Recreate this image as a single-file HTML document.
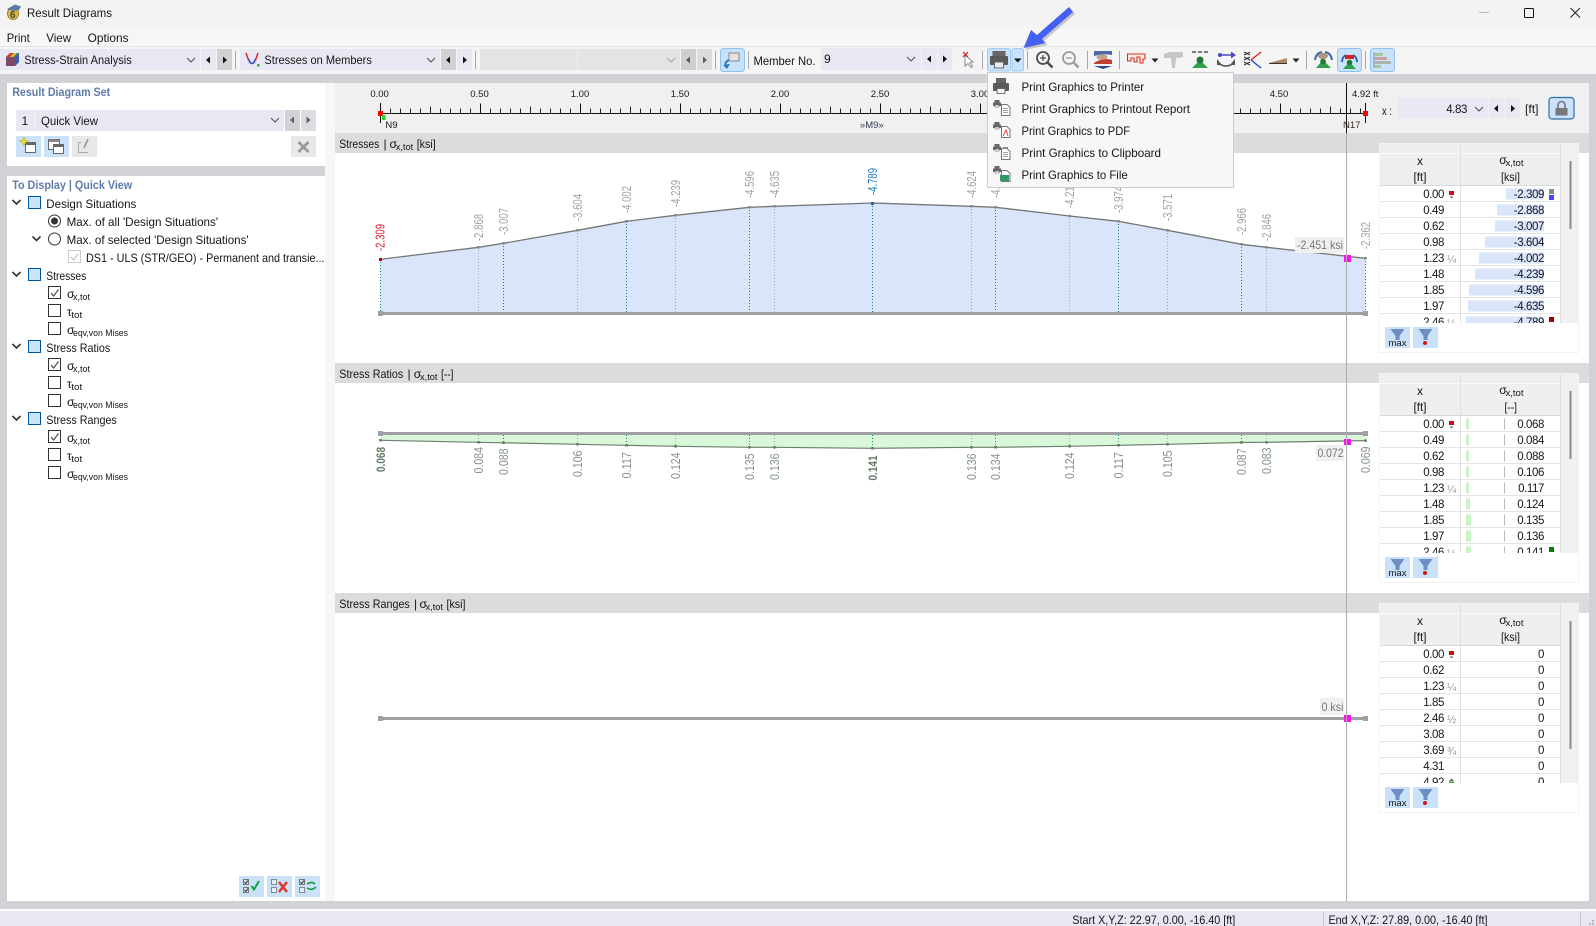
<!DOCTYPE html>
<html><head><meta charset="utf-8"><title>Result Diagrams</title>
<style>
html,body{margin:0;padding:0;background:#fff}
svg{display:block}
text{font-family:"Liberation Sans",sans-serif;font-size:12px;fill:#151515;white-space:pre}
.n{font-size:11.5px;letter-spacing:-.4px;text-anchor:end}
.s{font-size:9.5px}
.h{font-weight:bold;fill:#5f7ca8}
.r{font-size:9.5px;text-anchor:middle}
.g{fill:#a2a2a2;font-size:12.5px}
.gr{fill:#87968a;font-size:12.5px}
.f{font-size:11px;fill:#999}
</style></head><body>
<svg xmlns="http://www.w3.org/2000/svg" width="1596" height="926" viewBox="0 0 1596 926">
<defs>
<path id="chev" d="M-4-2L0 2L4-2" fill="none" stroke="#555" stroke-width="1.1"/>
<path id="chd" d="M-4-2L0 2L4-2" fill="none" stroke="#333" stroke-width="1.6"/>
<path id="tl" d="M2-3.5L-2 0L2 3.5Z" fill="#111"/>
<path id="tr" d="M-2-3.5L2 0L-2 3.5Z" fill="#111"/>
<path id="ck" d="M2.5 6.5L5 9.5L10 3" fill="none" stroke="#555" stroke-width="1.3"/>
<g id="tf">
<rect x="1379.5" y="143.5" width="199" height="209" fill="#fff" stroke="#f3f3f3"/>
<rect x="1380" y="144" width="181" height="41" fill="#efefef"/>
<path d="M1380 153.5H1561" stroke="#fafafa"/>
<path d="M1380 185.5H1561" stroke="#d8d8d8"/>
<rect x="1561" y="144" width="17" height="179" fill="#f0f0f0"/>
<path d="M1460.5 144V323" stroke="#e0e0e0"/>
<path d="M1560.5 144V323" stroke="#e0e0e0"/>
<path d="M1380 201.5H1560M1380 217.5H1560M1380 233.5H1560M1380 249.5H1560M1380 265.5H1560M1380 281.5H1560M1380 297.5H1560M1380 313.5H1560" stroke="#e4e4e4"/>
</g>
<g id="tc">
<rect x="1380" y="323" width="198" height="29" fill="#fff"/>
<rect x="1385" y="327" width="25" height="21" fill="#c9e2f9"/>
<path d="M1390.500 329h14l-5 7v4h-4v-4z" fill="#6f8fc4"/>
<rect x="1413" y="327" width="25" height="21" fill="#c9e2f9"/>
<path d="M1418.500 329h14l-5 7v4h-4v-4z" fill="#6f8fc4"/>
<circle cx="1425" cy="343" r="2" fill="#d01818"/>
</g>
<g id="mr"><rect x="1449" y="191" width="5" height="4" fill="#d00c0c"/><path d="M1449.500 196.500h4l-2 2z" fill="#666"/></g>
<g id="sp"><rect x=".5" y=".5" width="5" height="5" fill="#d8e2ec" stroke="#777"/><path d="M1.500 3L2.800 4.500L5 1.500" fill="none" stroke="#222" stroke-width=".9"/></g>
<g id="pr"><rect x="1.500" y="0" width="5" height="2.500" fill="#666"/><rect x="0" y="2.500" width="8" height="3.500" fill="#666"/><rect x="2" y="5" width="4" height="2" fill="#fff" stroke="#666" stroke-width=".6"/></g>
<path id="pg" d="M.5.5H6L9 3.500V11.500H.5Z" fill="#fff" stroke="#777"/>
</defs>

<!-- base -->
<rect width="1596" height="926" fill="#d2d1d6"/>
<rect width="1596" height="28" fill="#f3f3f3"/>
<rect y="28" width="1596" height="18" fill="#f6f6f6"/>
<rect y="46" width="1596" height="28" fill="#f5f5f5"/>
<path d="M0 46.500H1596" stroke="#e6e6e6"/>

<!-- title -->
<ellipse cx="13" cy="13.500" rx="5.500" ry="6" fill="#dcbc48" stroke="#9a8230"/>
<path d="M7 9L15 4.500L21 6.500L19 10L13 11Z" fill="#5a78a8"/>
<text x="10" y="18" style="font-size:10px;font-weight:bold;fill:#4a4a20">6</text>
<text x="27" y="17" textLength="85" lengthAdjust="spacingAndGlyphs">Result Diagrams</text>
<path d="M1479 12.500H1489" stroke="#bbb"/>
<rect x="1524.500" y="8.500" width="9" height="9" rx="1" fill="none" stroke="#111" stroke-width="1"/>
<path d="M1570.500 8L1580 17.500M1580 8L1570.500 17.500" stroke="#222" fill="none"/>

<!-- menu -->
<text x="6.700" y="42" textLength="23" lengthAdjust="spacingAndGlyphs">Print</text>
<text x="46.300" y="42" textLength="24.700" lengthAdjust="spacingAndGlyphs">View</text>
<text x="87.600" y="42" textLength="41" lengthAdjust="spacingAndGlyphs">Options</text>

<!-- toolbar combos -->
<rect x="0" y="49" width="200" height="21" fill="#e7e8f2"/>
<rect x="201" y="49" width="15" height="21" fill="#e7e8f2"/>
<rect x="217" y="49" width="15" height="21" fill="#d2d2d6"/>
<path d="M235.500 51V69" stroke="#a8a8a8"/>
<rect x="240" y="49" width="200" height="21" fill="#e7e8f2"/>
<rect x="441" y="49" width="15" height="21" fill="#d2d2d6"/>
<rect x="457" y="49" width="15" height="21" fill="#e7e8f2"/>
<path d="M475.500 51V69" stroke="#a8a8a8"/>
<rect x="480" y="49" width="200" height="21" fill="#e4e4e4"/>
<path d="M577.500 52V68" stroke="#f0f0f0"/>
<rect x="681" y="49" width="15" height="21" fill="#cfcfcf"/>
<rect x="697" y="49" width="15" height="21" fill="#dcdcdc"/>
<path d="M715.500 51V69" stroke="#a8a8a8"/>
<path d="M6 57L10 53H19V62L15 66H6Z" fill="#7a4a6a"/>
<path d="M6 57L10 53H14L10 57Z" fill="#d83a30"/><path d="M14 53H17L13 57H10Z" fill="#e8c830"/><path d="M17 53H19L15 57H13Z" fill="#3aa050"/><path d="M15 57L19 53V62L15 66Z" fill="#3c5cb4"/>
<text x="24.300" y="64" textLength="107.500" lengthAdjust="spacingAndGlyphs">Stress-Strain Analysis</text>
<use href="#chev" x="191" y="60"/><use href="#tl" x="208" y="60"/><use href="#tr" x="225" y="60"/>
<path d="M248 57Q252 67 256 57V64H248Z" fill="#d0d0f4"/>
<path d="M246 53L248.500 60M258 53L255.500 60" stroke="#d8242c" stroke-width="1.500" fill="none"/>
<path d="M248.500 59Q252 68 255.500 59" stroke="#3a4cc8" stroke-width="1.600" fill="none"/><rect x="257" y="64" width="2.500" height="2.500" fill="#2aba3a"/>
<text x="264.400" y="64" textLength="107.500" lengthAdjust="spacingAndGlyphs">Stresses on Members</text>
<use href="#chev" x="431" y="60"/><use href="#tl" x="448" y="60"/><use href="#tr" x="465" y="60"/>
<use href="#chev" x="671" y="60" opacity=".45"/><use href="#tl" x="688" y="60" opacity=".6"/><use href="#tr" x="705" y="60" opacity=".6"/>
<rect x="720.500" y="48.500" width="24" height="23" rx="3" fill="#c9e2f9" stroke="#8fc3f0"/>
<rect x="729" y="53" width="10" height="8" fill="#e4e4e4" stroke="#888"/>
<path d="M729 60Q724 62 726 67" fill="none" stroke="#2a78b8" stroke-width="1.800"/><path d="M723 65L727 69L730 64Z" fill="#2a78b8"/>
<path d="M748.500 51V69" stroke="#a8a8a8"/>
<text x="753.500" y="65" textLength="62" lengthAdjust="spacingAndGlyphs">Member No.</text>
<rect x="821" y="48" width="100" height="22" fill="#e7e8f2"/>
<text x="824" y="63">9</text>
<use href="#chev" x="911" y="59"/>
<rect x="922" y="48" width="15" height="22" fill="#e7e8f2"/><rect x="938" y="48" width="14" height="22" fill="#e7e8f2"/>
<use href="#tl" x="929" y="59"/><use href="#tr" x="945" y="59"/>
<rect x="953" y="48" width="25" height="22" fill="#f3f3f3"/>
<path d="M965 55L965 66L968 63.500L971 67.500L972.500 66.500L970 62.500L973 62Z" fill="#fff" stroke="#888"/>
<path d="M963 52L968 57M968 52L963 57" stroke="#d82020" stroke-width="1.200"/>
<path d="M982.500 51V69" stroke="#a8a8a8"/>
<rect x="987.500" y="48.500" width="23" height="22.500" rx="2" fill="#c9e2f9" stroke="#a0ccf4"/>
<rect x="1012" y="48.500" width="11.500" height="22.500" rx="2" fill="#c9e2f9" stroke="#a0ccf4"/>
<rect x="992.500" y="51" width="13" height="5" fill="#666"/><rect x="990" y="56" width="18" height="9" rx="1" fill="#5a5a5a"/><rect x="994.500" y="62" width="9" height="6" fill="#e8eef4" stroke="#666"/>
<path d="M1014 58.500H1021.500L1017.700 62.500Z" fill="#111"/>
<path d="M1027.500 51V69" stroke="#a8a8a8"/>
<circle cx="1043" cy="58" r="6" fill="#f5f5f5" stroke="#4c4c4c" stroke-width="1.800"/><path d="M1040 58H1046M1043 55V61" stroke="#4c4c4c" stroke-width="1.300"/><path d="M1047.500 62.500L1052.500 67.500" stroke="#4c4c4c" stroke-width="2.400"/>
<circle cx="1069" cy="58" r="6" fill="#f5f5f5" stroke="#9a9a9a" stroke-width="1.800"/><path d="M1066 58H1072" stroke="#9a9a9a" stroke-width="1.300"/><path d="M1073.500 62.500L1078.500 67.500" stroke="#9a9a9a" stroke-width="2.400"/>
<path d="M1087.500 51V69" stroke="#a8a8a8"/>
<rect x="1094" y="51" width="18" height="14" fill="#eef0f4"/>
<path d="M1094 51H1112V55Q1103 53 1094 56Z" fill="#4a68a8"/><path d="M1094 63Q1103 57 1112 60V64H1094Z" fill="#c04030"/><path d="M1094 66H1112L1103 69Z" fill="#2a4a8a"/>
<ellipse cx="1102" cy="57" rx="5.500" ry="2.800" fill="#bfa088"/>
<path d="M1119.500 51V69" stroke="#a8a8a8"/>
<path d="M1127.500 54H1145V59H1143V63H1140V57H1137V62H1134V58H1131V61H1127.500Z" fill="#f7efe6" stroke="#d83020" stroke-width="1.100"/>
<path d="M1151.500 58.500H1158.500L1155 62.500Z" fill="#222"/>
<path d="M1164 54L1169 52H1183V57L1178 58H1176L1175 68H1172L1171 58H1164Z" fill="#c6c6c6"/>
<path d="M1192 52H1196M1198 52H1202M1204 52H1208" stroke="#555" stroke-width="1.500"/>
<path d="M1192 68L1200 60L1208 68Z" fill="#2ea04a"/><circle cx="1200" cy="60" r="3.500" fill="#1e7a34"/>
<path d="M1218 55H1232" stroke="#4a4ac0" stroke-width="1.500"/><path d="M1231 51.500L1236 55L1231 58.500Z" fill="#4a4ac0"/><circle cx="1220" cy="55" r="2" fill="#4a4ac0"/>
<path d="M1218 63Q1226 69 1234 63" stroke="#555" stroke-width="1.500" fill="none"/><path d="M1217 59V65H1222ZM1235 59V65H1230Z" fill="#555"/>
<path d="M1244 52L1250 55M1250 52L1244 55M1244 57L1250 60M1250 57L1244 60M1244 62L1250 65M1250 62L1244 65" stroke="#333" fill="none"/>
<path d="M1251 60L1261 52" stroke="#e02020" stroke-width="1.300"/><path d="M1251 60L1261 68" stroke="#2040d0" stroke-width="1.300"/>
<path d="M1269 63H1287V58Z" fill="#a88c60"/><path d="M1269 63.500H1287" stroke="#333"/>
<path d="M1292.500 58.500H1299.500L1296 62.500Z" fill="#222"/>
<path d="M1306.500 51V69" stroke="#a8a8a8"/>
<path d="M1315 60Q1316 53 1322 52" fill="none" stroke="#3a6ab0" stroke-width="2"/><path d="M1332 60Q1331 53 1325 52" fill="none" stroke="#3a6ab0" stroke-width="2"/>
<ellipse cx="1323" cy="56" rx="5" ry="3.200" fill="#b09880"/><path d="M1316 68L1323 60L1331 68Z" fill="#2ea04a"/><circle cx="1323" cy="61.500" r="2.800" fill="#1e7a34"/>
<rect x="1337.500" y="48.500" width="24" height="23" rx="3" fill="#c9e2f9" stroke="#8fc3f0"/>
<path d="M1342 62Q1342 57 1346 55M1357 62Q1357 57 1353 55" fill="none" stroke="#2a5aa0" stroke-width="1.800"/><rect x="1345" y="55" width="9" height="4" fill="#d82020"/><path d="M1343 69L1349.500 62L1356 69Z" fill="#2ea04a"/><circle cx="1349.500" cy="62.500" r="2.800" fill="#1e7a34"/>
<path d="M1365.500 51V69" stroke="#a8a8a8"/>
<rect x="1370.500" y="48.500" width="24" height="23" rx="3" fill="#c9e2f9" stroke="#8fc3f0"/>
<path d="M1374 52V68" stroke="#888"/><rect x="1375" y="53" width="8" height="3" fill="#a8c8a0"/><rect x="1375" y="57" width="12" height="3" fill="#c8a0a0"/><rect x="1375" y="61" width="16" height="3" fill="#b0b0b0"/><rect x="1375" y="65" width="6" height="3" fill="#a8c8a0"/>

<!-- left panels -->
<rect x="7" y="83" width="318" height="83" fill="#fff"/>
<rect x="7" y="176" width="318" height="725" fill="#fff"/>
<rect x="325" y="83" width="10" height="818" fill="#f7f7f7"/>
<text x="12.200" y="96" class="h" textLength="98" lengthAdjust="spacingAndGlyphs">Result Diagram Set</text>
<rect x="16" y="110" width="268" height="21" fill="#e7e8f2"/>
<path d="M34.500 112V129" stroke="#f4f4f8"/>
<text x="21.500" y="125">1</text>
<text x="41" y="125" textLength="57" lengthAdjust="spacingAndGlyphs">Quick View</text>
<use href="#chev" x="275" y="120"/>
<rect x="285" y="110" width="15" height="21" fill="#d2d2d6"/><rect x="301" y="110" width="15" height="21" fill="#dcdce2"/>
<use href="#tl" x="292" y="120" opacity=".6"/><use href="#tr" x="308.500" y="120" opacity=".6"/>
<rect x="16" y="136" width="25" height="21" fill="#c9e2f9"/>
<rect x="25.500" y="142.500" width="10" height="10" fill="#fff" stroke="#666"/><rect x="25.500" y="142.500" width="10" height="2.500" fill="#666"/>
<path d="M24 137L25.200 140.300L28.500 141L25.500 142.500L24 146L22.500 142.500L19.500 141L22.800 140.300Z" fill="#f0e020" stroke="#b0a010" stroke-width=".5"/>
<rect x="44" y="136" width="25" height="21" fill="#c9e2f9"/>
<rect x="48.500" y="139.500" width="11" height="10" fill="#fff" stroke="#666"/><rect x="48.500" y="139.500" width="11" height="2.500" fill="#888"/>
<rect x="53.500" y="144.500" width="10" height="9" fill="#fff" stroke="#666"/><rect x="53.500" y="144.500" width="10" height="2.500" fill="#666"/>
<rect x="72" y="136" width="25" height="21" fill="#e8e8e8"/>
<path d="M81.500 142.500H78.500V152.500H88" fill="none" stroke="#aaa"/><path d="M88 139L84 148" stroke="#999" stroke-width="1.600"/>
<rect x="291" y="136" width="25" height="21" fill="#e8e8e8"/>
<path d="M298.500 142L308.500 152M308.500 142L298.500 152" stroke="#9a9a9a" stroke-width="2.800"/>

<text x="12.200" y="189" class="h" textLength="120" lengthAdjust="spacingAndGlyphs">To Display | Quick View</text>
<!-- tree -->
<use href="#chd" x="16.500" y="202"/>
<rect x="28.500" y="196.500" width="12" height="12" fill="#cce4f7" stroke="#00569c"/>
<text x="46.300" y="208" textLength="90" lengthAdjust="spacingAndGlyphs">Design Situations</text>
<circle cx="54.500" cy="221" r="6" fill="#fff" stroke="#333"/><circle cx="54.500" cy="221" r="3.500" fill="#333"/>
<text x="66.600" y="226" textLength="151.500" lengthAdjust="spacingAndGlyphs">Max. of all 'Design Situations'</text>
<use href="#chd" x="36.500" y="238.500"/>
<circle cx="54.500" cy="239" r="6" fill="#fff" stroke="#333"/>
<text x="66.600" y="244" textLength="182" lengthAdjust="spacingAndGlyphs">Max. of selected 'Design Situations'</text>
<rect x="68.500" y="250.500" width="12" height="12" fill="#fff" stroke="#ccc"/><path d="M71 257L73.500 260L78.500 253.500" fill="none" stroke="#ccc" stroke-width="1.300"/>
<text x="86" y="262" textLength="238.500" lengthAdjust="spacingAndGlyphs">DS1 - ULS (STR/GEO) - Permanent and transie...</text>

<use href="#chd" x="16.500" y="274"/>
<rect x="28.500" y="268.500" width="12" height="12" fill="#cce4f7" stroke="#00569c"/>
<text x="46.300" y="280" textLength="40" lengthAdjust="spacingAndGlyphs">Stresses</text>
<rect x="48.500" y="286.500" width="12" height="12" fill="#fff" stroke="#333"/><use href="#ck" x="48.500" y="286.500"/>
<text x="67" y="298">σ</text><text x="73" y="300" class="s" textLength="17" lengthAdjust="spacingAndGlyphs">x,tot</text>
<rect x="48.500" y="304.500" width="12" height="12" fill="#fff" stroke="#333"/>
<text x="67" y="316">τ</text><text x="71.300" y="318" class="s" textLength="11" lengthAdjust="spacingAndGlyphs">tot</text>
<rect x="48.500" y="322.500" width="12" height="12" fill="#fff" stroke="#333"/>
<text x="67" y="334">σ</text><text x="73" y="336" class="s" textLength="55" lengthAdjust="spacingAndGlyphs">eqv,von Mises</text>

<use href="#chd" x="16.500" y="346"/>
<rect x="28.500" y="340.500" width="12" height="12" fill="#cce4f7" stroke="#00569c"/>
<text x="46.300" y="352" textLength="64" lengthAdjust="spacingAndGlyphs">Stress Ratios</text>
<rect x="48.500" y="358.500" width="12" height="12" fill="#fff" stroke="#333"/><use href="#ck" x="48.500" y="358.500"/>
<text x="67" y="370">σ</text><text x="73" y="372" class="s" textLength="17" lengthAdjust="spacingAndGlyphs">x,tot</text>
<rect x="48.500" y="376.500" width="12" height="12" fill="#fff" stroke="#333"/>
<text x="67" y="388">τ</text><text x="71.300" y="390" class="s" textLength="11" lengthAdjust="spacingAndGlyphs">tot</text>
<rect x="48.500" y="394.500" width="12" height="12" fill="#fff" stroke="#333"/>
<text x="67" y="406">σ</text><text x="73" y="408" class="s" textLength="55" lengthAdjust="spacingAndGlyphs">eqv,von Mises</text>

<use href="#chd" x="16.500" y="418"/>
<rect x="28.500" y="412.500" width="12" height="12" fill="#cce4f7" stroke="#00569c"/>
<text x="46.300" y="424" textLength="70.500" lengthAdjust="spacingAndGlyphs">Stress Ranges</text>
<rect x="48.500" y="430.500" width="12" height="12" fill="#fff" stroke="#333"/><use href="#ck" x="48.500" y="430.500"/>
<text x="67" y="442">σ</text><text x="73" y="444" class="s" textLength="17" lengthAdjust="spacingAndGlyphs">x,tot</text>
<rect x="48.500" y="448.500" width="12" height="12" fill="#fff" stroke="#333"/>
<text x="67" y="460">τ</text><text x="71.300" y="462" class="s" textLength="11" lengthAdjust="spacingAndGlyphs">tot</text>
<rect x="48.500" y="466.500" width="12" height="12" fill="#fff" stroke="#333"/>
<text x="67" y="478">σ</text><text x="73" y="480" class="s" textLength="55" lengthAdjust="spacingAndGlyphs">eqv,von Mises</text>

<!-- bottom left buttons -->
<rect x="239" y="876" width="25" height="21" fill="#c9e2f9"/>
<use href="#sp" x="243" y="879"/><use href="#sp" x="243" y="887"/>
<path d="M251.500 886L254 889.500L259 881" fill="none" stroke="#18a048" stroke-width="2"/>
<rect x="267" y="876" width="25" height="21" fill="#c9e2f9"/>
<rect x="271.500" y="879.500" width="5" height="5" fill="#e4eef8" stroke="#888"/><rect x="271.500" y="887.500" width="5" height="5" fill="#e4eef8" stroke="#888"/>
<path d="M279 882L287 892M287 882L279 892" stroke="#e03828" stroke-width="2.500"/>
<rect x="295" y="876" width="25" height="21" fill="#c9e2f9"/>
<use href="#sp" x="299" y="879"/><rect x="299.500" y="887.500" width="5" height="5" fill="#e4eef8" stroke="#888"/>
<path d="M307 884Q312 881 315 884M316 887Q312 891 307 888" fill="none" stroke="#18a048" stroke-width="1.600"/>

<!-- main -->
<rect x="335" y="83" width="1254" height="50" fill="#f0f0f0"/>
<rect x="335" y="133" width="1254" height="20" fill="#dcdcdc"/>
<rect x="335" y="153" width="1254" height="210" fill="#fff"/>
<rect x="335" y="363" width="1254" height="20" fill="#dcdcdc"/>
<rect x="335" y="383" width="1254" height="210" fill="#fff"/>
<rect x="335" y="593" width="1254" height="20" fill="#dcdcdc"/>
<rect x="335" y="613" width="1254" height="288" fill="#fff"/>

<!-- ruler -->
<path d="M380 113.500H1365" stroke="#111"/>
<line x1="380" y1="111" x2="1365" y2="111" stroke="#222" stroke-width="5" stroke-dasharray="1 9"/>
<line x1="380" y1="110" x2="1365" y2="110" stroke="#222" stroke-width="7" stroke-dasharray="1 49"/>
<line x1="380" y1="108.500" x2="1365" y2="108.500" stroke="#111" stroke-width="10" stroke-dasharray="1 99"/>
<path d="M380.500 103V123M1365.500 103V123" stroke="#111"/>
<rect x="378" y="111" width="5" height="5" fill="#f00"/><rect x="382" y="115" width="3.500" height="5" fill="#2ed02e"/>
<rect x="1363" y="111" width="5" height="5" fill="#f00"/>
<text x="379.600" y="97" class="r">0.00</text><text x="479.500" y="97" class="r">0.50</text><text x="580" y="97" class="r">1.00</text><text x="680" y="97" class="r">1.50</text><text x="780" y="97" class="r">2.00</text><text x="880" y="97" class="r">2.50</text><text x="980" y="97" class="r">3.00</text><text x="1279" y="97" class="r">4.50</text>
<text x="1352" y="97" class="r" style="text-anchor:start">4.92 ft</text>
<text x="385.400" y="128" class="r" style="text-anchor:start">N9</text>
<text x="871.800" y="128" class="r" style="fill:#2a3a5a">»M9»</text>
<text x="1343" y="128" class="r" style="text-anchor:start;fill:#3a3020">N17</text>
<text x="1382" y="115" textLength="10" lengthAdjust="spacingAndGlyphs">x :</text>
<rect x="1398" y="98" width="90" height="20" fill="#e7e8f2"/>
<text x="1467" y="113" class="n">4.83</text>
<use href="#chev" x="1479" y="109"/>
<rect x="1489" y="98" width="15" height="20" fill="#e7e8f2"/><rect x="1505" y="98" width="15" height="20" fill="#e7e8f2"/>
<use href="#tl" x="1496" y="108.500"/><use href="#tr" x="1513" y="108.500"/>
<text x="1525" y="113" textLength="13.500" lengthAdjust="spacingAndGlyphs">[ft]</text>
<rect x="1549" y="97.500" width="25" height="21.500" rx="3" fill="#c9e2f9" stroke="#2f6fa8" stroke-width="1.200"/>
<path d="M1558 108V105a3.500 3.500 0 0 1 7 0V108" fill="none" stroke="#777" stroke-width="1.600"/><rect x="1555.500" y="108" width="12" height="7.500" fill="#777"/>

<!-- headers -->
<text x="339.300" y="148" textLength="40" lengthAdjust="spacingAndGlyphs">Stresses</text><text x="383.500" y="148">|</text><text x="389.500" y="148">σ</text><text x="395.700" y="150" class="s" textLength="17.500" lengthAdjust="spacingAndGlyphs">x,tot</text><text x="416.700" y="148" textLength="19" lengthAdjust="spacingAndGlyphs">[ksi]</text>
<text x="339.300" y="378" textLength="64" lengthAdjust="spacingAndGlyphs">Stress Ratios</text><text x="407.500" y="378">|</text><text x="413.700" y="378">σ</text><text x="420" y="380" class="s" textLength="17.500" lengthAdjust="spacingAndGlyphs">x,tot</text><text x="441" y="378" textLength="12.500" lengthAdjust="spacingAndGlyphs">[--]</text>
<text x="339.300" y="608" textLength="70.500" lengthAdjust="spacingAndGlyphs">Stress Ranges</text><text x="414" y="608">|</text><text x="419.500" y="608">σ</text><text x="425.500" y="610" class="s" textLength="17.500" lengthAdjust="spacingAndGlyphs">x,tot</text><text x="446.500" y="608" textLength="19" lengthAdjust="spacingAndGlyphs">[ksi]</text>

<!-- diagram 1 -->
<path d="M380.500 259.300L478.500 247.300L503.500 243.300L577.500 230.300L626.500 221.300L675.500 215.300L749.500 207.300L774.500 206.300L872.500 203L971.500 206.300L995.500 207.300L1069.500 216L1118.500 221.300L1167.500 230.300L1241.500 244.300L1266.500 247.300L1365.500 258.300V313H380.500Z" fill="#d9e5fb"/>
<path d="M380.500 259.300L478.500 247.300L503.500 243.300L577.500 230.300L626.500 221.300L675.500 215.300L749.500 207.300L774.500 206.300L872.500 203L971.500 206.300L995.500 207.300L1069.500 216L1118.500 221.300L1167.500 230.300L1241.500 244.300L1266.500 247.300L1365.500 258.300" fill="none" stroke="#777" stroke-width="1.300"/>
<path d="M478.500 247V312M577.500 230V312M675.500 215V312M774.500 206V312M971.500 206V312M1069.500 216V312M1167.500 230V312M1266.500 247V312" stroke="#aaa" stroke-dasharray="1 2" fill="none"/>
<path d="M380.500 259V312M503.500 243V312M626.500 221V312M749.500 207V312M872.500 203V312M995.500 207V312M1118.500 221V312M1241.500 244V312M1365.500 258V312" stroke="#0f8585" stroke-dasharray="1 2" fill="none"/>
<path d="M380 313.500H1366" stroke="#a09fa4" stroke-width="3"/>
<rect x="378" y="311" width="5" height="5" fill="#a09fa4"/><rect x="1363" y="311" width="5" height="5" fill="#a09fa4"/>
<path d="M478.500 247.300h.1M503.500 243.300h.1M577.500 230.300h.1M626.500 221.300h.1M675.500 215.300h.1M749.500 207.300h.1M774.500 206.300h.1M971.500 206.300h.1M995.500 207.300h.1M1069.500 216h.1M1118.500 221.300h.1M1167.500 230.300h.1M1241.500 244.300h.1M1266.500 247.300h.1M1365.500 258.300h.1" stroke="#888" stroke-width="2.500" stroke-linecap="square" fill="none"/>
<rect x="379" y="258" width="3" height="3" fill="#c00010"/><rect x="871" y="202" width="3" height="3" fill="#0f6fa8"/>
<text transform="translate(384.500,251) rotate(-90)" textLength="27" lengthAdjust="spacingAndGlyphs" style="fill:#e01830;font-size:12.500px">-2.309</text>
<text transform="translate(483,241) rotate(-90)" textLength="27" lengthAdjust="spacingAndGlyphs" class="g">-2.868</text>
<text transform="translate(508,235) rotate(-90)" textLength="27" lengthAdjust="spacingAndGlyphs" class="g">-3.007</text>
<text transform="translate(582,221) rotate(-90)" textLength="27" lengthAdjust="spacingAndGlyphs" class="g">-3.604</text>
<text transform="translate(631,213) rotate(-90)" textLength="27" lengthAdjust="spacingAndGlyphs" class="g">-4.002</text>
<text transform="translate(680,207) rotate(-90)" textLength="27" lengthAdjust="spacingAndGlyphs" class="g">-4.239</text>
<text transform="translate(754,198) rotate(-90)" textLength="27" lengthAdjust="spacingAndGlyphs" class="g">-4.596</text>
<text transform="translate(779,198) rotate(-90)" textLength="27" lengthAdjust="spacingAndGlyphs" class="g">-4.635</text>
<text transform="translate(877,195) rotate(-90)" textLength="27" lengthAdjust="spacingAndGlyphs" style="fill:#1f7fbf;font-size:12.500px">-4.789</text>
<text transform="translate(976,198) rotate(-90)" textLength="27" lengthAdjust="spacingAndGlyphs" class="g">-4.624</text>
<text transform="translate(1000,198) rotate(-90)" textLength="27" lengthAdjust="spacingAndGlyphs" class="g">-4.596</text>
<text transform="translate(1074,208) rotate(-90)" textLength="27" lengthAdjust="spacingAndGlyphs" class="g">-4.216</text>
<text transform="translate(1123,213) rotate(-90)" textLength="27" lengthAdjust="spacingAndGlyphs" class="g">-3.974</text>
<text transform="translate(1172,221) rotate(-90)" textLength="27" lengthAdjust="spacingAndGlyphs" class="g">-3.571</text>
<text transform="translate(1246,235) rotate(-90)" textLength="27" lengthAdjust="spacingAndGlyphs" class="g">-2.966</text>
<text transform="translate(1271,241) rotate(-90)" textLength="27" lengthAdjust="spacingAndGlyphs" class="g">-2.846</text>
<text transform="translate(1370,249) rotate(-90)" textLength="27" lengthAdjust="spacingAndGlyphs" class="g">-2.362</text>
<rect x="1295" y="237" width="49" height="16" fill="#f0f0f0"/>
<text x="1297" y="249" style="fill:#777" textLength="46" lengthAdjust="spacingAndGlyphs">-2.451 ksi</text>
<rect x="1344" y="255" width="7" height="7" fill="#ff10f0"/>

<!-- diagram 2 -->
<path d="M380.500 433V440.300L478.500 442.300L503.500 442.800L577.500 444.300L626.500 445.300L675.500 446.300L749.500 447.300L774.500 447.300L872.500 448.300L971.500 447.300L995.500 447.300L1069.500 446.300L1118.500 445.300L1167.500 444.300L1241.500 442.500L1266.500 442.300L1365.500 440.600V433Z" fill="#d9f7d9"/>
<path d="M380.500 440.300L478.500 442.300L503.500 442.800L577.500 444.300L626.500 445.300L675.500 446.300L749.500 447.300L774.500 447.300L872.500 448.300L971.500 447.300L995.500 447.300L1069.500 446.300L1118.500 445.300L1167.500 444.300L1241.500 442.500L1266.500 442.300L1365.500 440.600" fill="none" stroke="#6f7f6f" stroke-width="1.200"/>
<path d="M478.500 435V442M577.500 435V444M675.500 435V446M774.500 435V447M971.500 435V447M1069.500 435V446M1167.500 435V444M1266.500 435V442" stroke="#aaa" stroke-dasharray="1 2" fill="none"/>
<path d="M503.500 435V442M626.500 435V445M749.500 435V447M872.500 435V448M995.500 435V447M1118.500 435V445M1241.500 435V442" stroke="#0f8585" stroke-dasharray="1 2" fill="none"/>
<path d="M380 433.500H1366" stroke="#a09fa4" stroke-width="3"/>
<rect x="378" y="431" width="5" height="5" fill="#a09fa4"/><rect x="1363" y="431" width="5" height="5" fill="#a09fa4"/>
<path d="M380.500 440.300h.1M478.500 442.300h.1M503.500 442.800h.1M577.500 444.300h.1M626.500 445.300h.1M675.500 446.300h.1M749.500 447.300h.1M774.500 447.300h.1M872.500 448.300h.1M971.500 447.300h.1M995.500 447.300h.1M1069.500 446.300h.1M1118.500 445.300h.1M1167.500 444.300h.1M1241.500 442.500h.1M1266.500 442.300h.1M1365.500 440.600h.1" stroke="#5f7f5f" stroke-width="2.500" stroke-linecap="square" fill="none"/>
<text transform="translate(385,472) rotate(-90)" textLength="25" lengthAdjust="spacingAndGlyphs" style="font-weight:bold;fill:#667a68">0.068</text>
<text transform="translate(483,473.500) rotate(-90)" textLength="26.500" lengthAdjust="spacingAndGlyphs" class="gr">0.084</text>
<text transform="translate(508,475) rotate(-90)" textLength="26.500" lengthAdjust="spacingAndGlyphs" class="gr">0.088</text>
<text transform="translate(582,477) rotate(-90)" textLength="26.500" lengthAdjust="spacingAndGlyphs" class="gr">0.106</text>
<text transform="translate(631,478.500) rotate(-90)" textLength="26.500" lengthAdjust="spacingAndGlyphs" class="gr">0.117</text>
<text transform="translate(680,479) rotate(-90)" textLength="26.500" lengthAdjust="spacingAndGlyphs" class="gr">0.124</text>
<text transform="translate(754,480) rotate(-90)" textLength="26.500" lengthAdjust="spacingAndGlyphs" class="gr">0.135</text>
<text transform="translate(779,480) rotate(-90)" textLength="26.500" lengthAdjust="spacingAndGlyphs" class="gr">0.136</text>
<text transform="translate(877,480.500) rotate(-90)" textLength="25" lengthAdjust="spacingAndGlyphs" style="font-weight:bold;fill:#667a68">0.141</text>
<text transform="translate(976,480) rotate(-90)" textLength="26.500" lengthAdjust="spacingAndGlyphs" class="gr">0.136</text>
<text transform="translate(1000,480) rotate(-90)" textLength="26.500" lengthAdjust="spacingAndGlyphs" class="gr">0.134</text>
<text transform="translate(1074,479) rotate(-90)" textLength="26.500" lengthAdjust="spacingAndGlyphs" class="gr">0.124</text>
<text transform="translate(1123,478.500) rotate(-90)" textLength="26.500" lengthAdjust="spacingAndGlyphs" class="gr">0.117</text>
<text transform="translate(1172,477) rotate(-90)" textLength="26.500" lengthAdjust="spacingAndGlyphs" class="gr">0.105</text>
<text transform="translate(1246,475) rotate(-90)" textLength="26.500" lengthAdjust="spacingAndGlyphs" class="gr">0.087</text>
<text transform="translate(1271,474) rotate(-90)" textLength="26.500" lengthAdjust="spacingAndGlyphs" class="gr">0.083</text>
<text transform="translate(1370,473) rotate(-90)" textLength="26.500" lengthAdjust="spacingAndGlyphs" class="gr">0.069</text>
<rect x="1316" y="445" width="28" height="16" fill="#f0f0f0"/>
<text x="1317.500" y="457" style="fill:#777" textLength="26" lengthAdjust="spacingAndGlyphs">0.072</text>
<rect x="1344" y="439" width="7" height="6" fill="#ff10f0"/>

<!-- diagram 3 -->
<path d="M380 718.500H1366" stroke="#a09fa4" stroke-width="3"/>
<rect x="378" y="716" width="5" height="5" fill="#a09fa4"/><rect x="1363" y="716" width="5" height="5" fill="#a09fa4"/>
<rect x="1320" y="698" width="24" height="17" fill="#f0f0f0"/>
<text x="1321.500" y="711" style="fill:#777" textLength="22" lengthAdjust="spacingAndGlyphs">0 ksi</text>
<rect x="1344" y="715" width="7" height="7" fill="#ff10f0"/>

<!-- table 1 -->
<use href="#tf"/>
<text x="1420" y="165" style="text-anchor:middle">x</text><text x="1420" y="181" style="text-anchor:middle" textLength="13" lengthAdjust="spacingAndGlyphs">[ft]</text>
<text x="1499.300" y="164">σ</text><text x="1505.500" y="166" class="s" textLength="18" lengthAdjust="spacingAndGlyphs">x,tot</text><text x="1501" y="181" textLength="19" lengthAdjust="spacingAndGlyphs">[ksi]</text>
<rect x="1569.500" y="161" width="2" height="68" fill="#8a8a8a"/>
<g fill="#d9e5fb"><rect x="1506" y="188.500" width="38" height="11"/><rect x="1497" y="204.500" width="47" height="11"/><rect x="1495" y="220.500" width="49" height="11"/><rect x="1485" y="236.500" width="59" height="11"/><rect x="1479" y="252.500" width="65" height="11"/><rect x="1475" y="268.500" width="69" height="11"/><rect x="1469" y="284.500" width="75" height="11"/><rect x="1468" y="300.500" width="76" height="11"/><rect x="1466" y="316.500" width="78" height="11"/></g>
<text x="1444" y="198" class="n">0.00</text><text x="1544" y="198" class="n">-2.309</text>
<text x="1444" y="214" class="n">0.49</text><text x="1544" y="214" class="n">-2.868</text>
<text x="1444" y="230" class="n">0.62</text><text x="1544" y="230" class="n">-3.007</text>
<text x="1444" y="246" class="n">0.98</text><text x="1544" y="246" class="n">-3.604</text>
<text x="1444" y="262" class="n">1.23</text><text x="1447" y="263" class="f">¼</text><text x="1544" y="262" class="n">-4.002</text>
<text x="1444" y="278" class="n">1.48</text><text x="1544" y="278" class="n">-4.239</text>
<text x="1444" y="294" class="n">1.85</text><text x="1544" y="294" class="n">-4.596</text>
<text x="1444" y="310" class="n">1.97</text><text x="1544" y="310" class="n">-4.635</text>
<text x="1444" y="326" class="n">2.46</text><text x="1447" y="327" class="f">½</text><text x="1544" y="326" class="n">-4.789</text>
<use href="#mr"/>
<rect x="1549" y="189" width="5" height="5" fill="#888"/><rect x="1549" y="195" width="5" height="5" fill="#4444ff"/>
<rect x="1549" y="317" width="5" height="5" fill="#a00000"/>
<use href="#tc"/>
<text x="1397.500" y="346" class="s" style="text-anchor:middle">max</text>

<!-- table 2 -->
<g transform="translate(0,230)"><use href="#tf"/></g>
<text x="1420" y="395" style="text-anchor:middle">x</text><text x="1420" y="411" style="text-anchor:middle" textLength="13" lengthAdjust="spacingAndGlyphs">[ft]</text>
<text x="1499.300" y="394">σ</text><text x="1505.500" y="396" class="s" textLength="18" lengthAdjust="spacingAndGlyphs">x,tot</text><text x="1504.500" y="411" textLength="12.500" lengthAdjust="spacingAndGlyphs">[--]</text>
<rect x="1569.500" y="391" width="2" height="68" fill="#8a8a8a"/>
<g fill="#c9f3c9"><rect x="1466" y="418.500" width="3" height="11"/><rect x="1466" y="434.500" width="3" height="11"/><rect x="1466" y="450.500" width="3" height="11"/><rect x="1466" y="466.500" width="3" height="11"/><rect x="1466" y="482.500" width="3" height="11"/><rect x="1466" y="498.500" width="4" height="11"/><rect x="1466" y="514.500" width="5" height="11"/><rect x="1466" y="530.500" width="5" height="11"/><rect x="1466" y="546.500" width="5" height="11"/></g>
<path d="M1504.500 418.500v11M1504.500 434.500v11M1504.500 450.500v11M1504.500 466.500v11M1504.500 482.500v11M1504.500 498.500v11M1504.500 514.500v11M1504.500 530.500v11M1504.500 546.500v11" stroke="#bbb"/>
<text x="1444" y="428" class="n">0.00</text><text x="1544" y="428" class="n">0.068</text>
<text x="1444" y="444" class="n">0.49</text><text x="1544" y="444" class="n">0.084</text>
<text x="1444" y="460" class="n">0.62</text><text x="1544" y="460" class="n">0.088</text>
<text x="1444" y="476" class="n">0.98</text><text x="1544" y="476" class="n">0.106</text>
<text x="1444" y="492" class="n">1.23</text><text x="1447" y="493" class="f">¼</text><text x="1544" y="492" class="n">0.117</text>
<text x="1444" y="508" class="n">1.48</text><text x="1544" y="508" class="n">0.124</text>
<text x="1444" y="524" class="n">1.85</text><text x="1544" y="524" class="n">0.135</text>
<text x="1444" y="540" class="n">1.97</text><text x="1544" y="540" class="n">0.136</text>
<text x="1444" y="556" class="n">2.46</text><text x="1447" y="557" class="f">½</text><text x="1544" y="556" class="n">0.141</text>
<g transform="translate(0,230)"><use href="#mr"/></g>
<rect x="1549" y="547" width="5" height="5" fill="#008000"/>
<g transform="translate(0,230)"><use href="#tc"/></g>
<text x="1397.500" y="576" class="s" style="text-anchor:middle">max</text>

<!-- table 3 -->
<g transform="translate(0,460)"><use href="#tf"/></g>
<text x="1420" y="625" style="text-anchor:middle">x</text><text x="1420" y="641" style="text-anchor:middle" textLength="13" lengthAdjust="spacingAndGlyphs">[ft]</text>
<text x="1499.300" y="624">σ</text><text x="1505.500" y="626" class="s" textLength="18" lengthAdjust="spacingAndGlyphs">x,tot</text><text x="1501" y="641" textLength="19" lengthAdjust="spacingAndGlyphs">[ksi]</text>
<rect x="1569.500" y="621" width="2" height="128" fill="#8a8a8a"/>
<text x="1444" y="658" class="n">0.00</text><text x="1544" y="658" class="n">0</text>
<text x="1444" y="674" class="n">0.62</text><text x="1544" y="674" class="n">0</text>
<text x="1444" y="690" class="n">1.23</text><text x="1447" y="691" class="f">¼</text><text x="1544" y="690" class="n">0</text>
<text x="1444" y="706" class="n">1.85</text><text x="1544" y="706" class="n">0</text>
<text x="1444" y="722" class="n">2.46</text><text x="1447" y="723" class="f">½</text><text x="1544" y="722" class="n">0</text>
<text x="1444" y="738" class="n">3.08</text><text x="1544" y="738" class="n">0</text>
<text x="1444" y="754" class="n">3.69</text><text x="1447" y="755" class="f">¾</text><text x="1544" y="754" class="n">0</text>
<text x="1444" y="770" class="n">4.31</text><text x="1544" y="770" class="n">0</text>
<text x="1444" y="786" class="n">4.92</text><text x="1544" y="786" class="n">0</text>
<g transform="translate(0,460)"><use href="#mr"/></g>
<path d="M1451.500 778.500L1454 781H1449Z" fill="#666"/><rect x="1449" y="781.500" width="5" height="2" fill="#10c010"/>
<g transform="translate(0,460)"><use href="#tc"/></g>
<text x="1397.500" y="806" class="s" style="text-anchor:middle">max</text>

<!-- cursor line -->
<path d="M1346.500 83V133" stroke="#111"/>
<path d="M1346.500 133V901" stroke="#ababab"/>

<!-- print menu -->
<rect x="987.500" y="72.500" width="246" height="115" fill="#f7f7f7" stroke="#ccc"/>
<rect x="996" y="78" width="10" height="5" fill="#666"/><rect x="993" y="83" width="16" height="8" rx="1" fill="#5a5a5a"/><rect x="997" y="88.500" width="8" height="5" fill="#eef2f6" stroke="#555" stroke-width=".8"/>
<use href="#pr" x="993" y="100"/><use href="#pg" x="1001" y="104"/><path d="M1003 108.500h5M1003 110.500h5M1003 112.500h5" stroke="#888" stroke-width=".8"/>
<use href="#pr" x="993" y="122"/><use href="#pg" x="1001" y="126"/><path d="M1003 136L1006 130L1008 136" fill="none" stroke="#e04040"/>
<use href="#pr" x="993" y="144"/><use href="#pg" x="1001" y="148"/><rect x="1003" y="147" width="5" height="2" fill="#888"/><path d="M1003 152.500h5M1003 154.500h5M1003 156.500h5" stroke="#888" stroke-width=".8"/>
<use href="#pr" x="993" y="166"/><use href="#pg" x="1001" y="170"/><rect x="1000" y="175" width="9" height="6" fill="#2f9a68"/>
<text x="1021.500" y="91" textLength="122.600" lengthAdjust="spacingAndGlyphs">Print Graphics to Printer</text>
<text x="1021.500" y="113" textLength="168.500" lengthAdjust="spacingAndGlyphs">Print Graphics to Printout Report</text>
<text x="1021.500" y="135" textLength="108.600" lengthAdjust="spacingAndGlyphs">Print Graphics to PDF</text>
<text x="1021.500" y="157" textLength="139.500" lengthAdjust="spacingAndGlyphs">Print Graphics to Clipboard</text>
<text x="1021.500" y="179" textLength="106.200" lengthAdjust="spacingAndGlyphs">Print Graphics to File</text>

<!-- blue arrow -->
<path d="M1025.500 50L1033 32L1039 37L1071 9L1075 14L1044 41L1047.500 45Z" fill="#222" opacity=".22"/>
<path d="M1023.500 48L1031 30L1037 35L1069 7L1073 12L1042 39L1045.500 43Z" fill="#4560f5"/>

<!-- status bar -->
<rect x="0" y="909" width="1596" height="2" fill="#fff"/>
<rect x="0" y="911" width="1596" height="15" fill="#e7e8f2"/>
<text x="1072.300" y="924" textLength="163" lengthAdjust="spacingAndGlyphs">Start X,Y,Z: 22.97, 0.00, -16.40 [ft]</text>
<path d="M1323.500 911V926" stroke="#c8c8d0"/>
<text x="1328.500" y="924" textLength="159" lengthAdjust="spacingAndGlyphs">End X,Y,Z: 27.89, 0.00, -16.40 [ft]</text>
<path d="M1580.500 911V926" stroke="#c8c8d0"/>
<path d="M1592 920h2v2h-2zM1589 923h2v2h-2zM1592 923h2v2h-2z" fill="#b4b4bc"/>
</svg>
</body></html>
